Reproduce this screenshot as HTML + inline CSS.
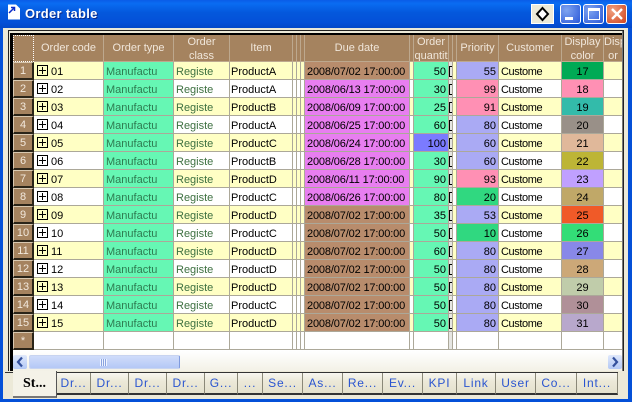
<!DOCTYPE html>
<html><head><meta charset="utf-8"><style>
html,body{margin:0;padding:0;width:632px;height:402px;overflow:hidden;background:#ece9d8}
*{box-sizing:border-box}
body{font:11px/14px "Liberation Sans",sans-serif;position:relative}
.a{position:absolute}
#title{left:0;top:0;width:632px;height:28px;background:linear-gradient(#0a5ce8 0,#0a6cf2 12%,#0458dc 45%,#0450d8 80%,#0348c8 100%)}
#t{left:25px;top:6px;color:#fff;font:bold 13px/16px "Liberation Sans",sans-serif;letter-spacing:.3px;text-shadow:1px 1px #0a2a8a}
.bt{top:4px;height:20px;border:1px solid #fff;border-radius:3px;background:radial-gradient(circle at 30% 30%,#7fa4f0,#2a58d8)}
#grid{left:13px;top:35px;width:609px;height:316px;overflow:hidden;background:#fff}
table{border-collapse:separate;border-spacing:0;table-layout:fixed;width:610px}
td{height:18px;padding:2px 2px 0;border-right:1px solid #aca899;border-bottom:1px solid #aca899;white-space:nowrap;overflow:hidden;color:#000;background:#fff}
tr:not(.h) td:nth-child(9){letter-spacing:-.15px}
tr:not(.h) td:nth-child(15){letter-spacing:-.4px}
tr.h td{height:27px;background:#a5835f;color:#f0e6da;text-align:center;padding:0;border-color:#bda88e}
tr.h div{height:26px;line-height:14px;margin-top:-1px}
tr.o td{background:#ffffc4}
td.r{background:#a5835f!important;color:#f2e8dc;text-align:center;padding:1px 0 0;border:1px solid #2a2418;border-top-color:#d8c8b0;border-left-color:#d8c8b0;border-bottom-width:2px;border-right-width:2px}
td.c{padding-left:17px;position:relative}
td.c i{position:absolute;left:3px;top:3px;width:11px;height:11px;border:1px solid #000;background:linear-gradient(#000,#000) 50% 50%/7px 1px no-repeat,linear-gradient(#000,#000) 50% 50%/1px 7px no-repeat}
td.m{background:#66f7b4!important;color:#2e7a50}
td.g{color:#3d7040}
td.i{padding-left:1px}
td.n{text-align:right;padding-right:2px}
td.d{text-align:center;padding:2px 0 0}
td.s{padding:0}
td.k{padding:0;position:relative;background:#e6e6e2!important}
td.k:before{content:"";position:absolute;left:0;top:4px;width:3px;height:9px;border:1px solid #000;border-right:0}
.bn{background:#b88c6c!important}.pk{background:#e87ef0!important}
.q{background:#66f7b4!important}.b{background:#aaaaf4!important}.p{background:#ff90b4!important}.gn{background:#30d880!important}
#sb{left:13px;top:351px;width:609px;height:20px;background:linear-gradient(#fff,#f3f1e6)}
.sbb{top:4px;width:14px;height:14px;background:linear-gradient(#dfe8fb,#b3c8f5);border-radius:2px}
.tab{top:373px;height:22px;background:linear-gradient(#f8f7f0,#ece9d8 40%,#e4e1cd);border-right:1px solid #8a8878;border-bottom:2px solid #333;color:#2a55d0;text-align:center;line-height:20px;font-size:12px;letter-spacing:.8px}
</style></head><body>
<div class="a" style="left:0;top:28px;width:632px;height:374px;background:#ece9d8"></div>
<div class="a" style="left:0;top:28px;width:3px;height:374px;background:#0450d8"></div>
<div class="a" style="left:628px;top:28px;width:4px;height:374px;background:#0450d8"></div>
<div class="a" style="left:0;top:399px;width:632px;height:3px;background:#0450d8"></div>
<div class="a" id="title"></div>
<svg class="a" style="left:7px;top:4px" width="14" height="16"><path d="M1 .5h8l4 4v11H1z" fill="#fff"/><path d="M2 9l5-5M4 3.5h3.500V7" stroke="#0a2ac8" fill="none" stroke-width="1.500"/></svg>
<div class="a" id="t">Order table</div>
<div class="a" style="left:531px;top:4px;width:23px;height:20px;background:#ece9d8;border:1px solid #fff"></div>
<svg class="a" style="left:535px;top:6px" width="15" height="16"><path d="M7.500 2L13 8l-5.500 6L2 8z" fill="#fff" stroke="#000" stroke-width="2"/></svg>
<div class="a bt" style="left:560px;width:21px"><div class="a" style="left:4px;top:12px;width:8px;height:3px;background:#fff"></div></div>
<div class="a bt" style="left:583px;width:21px"><div class="a" style="left:4px;top:3px;width:12px;height:12px;border:1px solid #fff;border-top-width:3px"></div></div>
<div class="a bt" style="left:606px;width:21px;background:radial-gradient(circle at 30% 30%,#f0a080,#d0431c)"><svg class="a" style="left:3px;top:2px" width="14" height="14"><path d="M2 2l10 10M12 2L2 12" stroke="#fff" stroke-width="2.400"/></svg></div>
<div class="a" style="left:8px;top:30px;width:616px;height:341px;background:#ece9d8;border:1px solid #222;border-bottom:0"></div>
<div class="a" style="left:10px;top:33px;width:612px;height:338px;background:#fff;border-top:2px solid #000;border-left:3px solid #000"></div>
<div class="a" style="left:622px;top:31px;width:1px;height:340px;background:#777"></div>
<div class="a" id="grid"><table>
<colgroup><col style="width:21px"><col style="width:70px"><col style="width:70px"><col style="width:56px"><col style="width:63px"><col style="width:4px"><col style="width:4px"><col style="width:4px"><col style="width:105px"><col style="width:4px"><col style="width:35px"><col style="width:4px"><col style="width:4px"><col style="width:42px"><col style="width:63px"><col style="width:42px"><col style="width:19px"></colgroup>
<tr class="h"><td style="border:1px dotted #fff"><td>Order code<td>Order type<td><div>Order<br>class</div><td>Item<td><td><td><td>Due date<td><td><div>Order<br>quantit</div><td><td><td>Priority<td>Customer<td><div>Display<br>color</div><td><div>Disp<br>or</div>
<tr class="o"><td class="r">1<td class="c"><i></i>01<td class="m">Manufactu<td class="g">Registe<td class="i">ProductA<td class="s"><td class="s"><td class="s"><td class="bn">2008/07/02 17:00:00<td class="s"><td class="n q">50<td class="k"><td class="s"><td class="n b">55<td>Custome<td class="d" style="background:#00aa55">17<td>
<tr><td class="r">2<td class="c"><i></i>02<td class="m">Manufactu<td class="g">Registe<td class="i">ProductA<td class="s"><td class="s"><td class="s"><td class="pk">2008/06/13 17:00:00<td class="s"><td class="n q">30<td class="k"><td class="s"><td class="n p">99<td>Custome<td class="d" style="background:#ff90b4">18<td>
<tr class="o"><td class="r">3<td class="c"><i></i>03<td class="m">Manufactu<td class="g">Registe<td class="i">ProductB<td class="s"><td class="s"><td class="s"><td class="pk">2008/06/09 17:00:00<td class="s"><td class="n q">25<td class="k"><td class="s"><td class="n p">91<td>Custome<td class="d" style="background:#33bbaa">19<td>
<tr><td class="r">4<td class="c"><i></i>04<td class="m">Manufactu<td class="g">Registe<td class="i">ProductA<td class="s"><td class="s"><td class="s"><td class="pk">2008/06/25 17:00:00<td class="s"><td class="n q">60<td class="k"><td class="s"><td class="n b">80<td>Custome<td class="d" style="background:#999088">20<td>
<tr class="o"><td class="r">5<td class="c"><i></i>05<td class="m">Manufactu<td class="g">Registe<td class="i">ProductC<td class="s"><td class="s"><td class="s"><td class="pk">2008/06/24 17:00:00<td class="s"><td class="n" style="background:#7b7bff">100<td class="k"><td class="s"><td class="n b">60<td>Custome<td class="d" style="background:#e0b89a">21<td>
<tr><td class="r">6<td class="c"><i></i>06<td class="m">Manufactu<td class="g">Registe<td class="i">ProductB<td class="s"><td class="s"><td class="s"><td class="pk">2008/06/28 17:00:00<td class="s"><td class="n q">30<td class="k"><td class="s"><td class="n b">60<td>Custome<td class="d" style="background:#bdb536">22<td>
<tr class="o"><td class="r">7<td class="c"><i></i>07<td class="m">Manufactu<td class="g">Registe<td class="i">ProductD<td class="s"><td class="s"><td class="s"><td class="pk">2008/06/11 17:00:00<td class="s"><td class="n q">90<td class="k"><td class="s"><td class="n p">93<td>Custome<td class="d" style="background:#c0a0ff">23<td>
<tr><td class="r">8<td class="c"><i></i>08<td class="m">Manufactu<td class="g">Registe<td class="i">ProductC<td class="s"><td class="s"><td class="s"><td class="pk">2008/06/26 17:00:00<td class="s"><td class="n q">80<td class="k"><td class="s"><td class="n gn">20<td>Custome<td class="d" style="background:#c0a868">24<td>
<tr class="o"><td class="r">9<td class="c"><i></i>09<td class="m">Manufactu<td class="g">Registe<td class="i">ProductD<td class="s"><td class="s"><td class="s"><td class="bn">2008/07/02 17:00:00<td class="s"><td class="n q">35<td class="k"><td class="s"><td class="n b">53<td>Custome<td class="d" style="background:#f05a28">25<td>
<tr><td class="r">10<td class="c"><i></i>10<td class="m">Manufactu<td class="g">Registe<td class="i">ProductC<td class="s"><td class="s"><td class="s"><td class="bn">2008/07/02 17:00:00<td class="s"><td class="n q">50<td class="k"><td class="s"><td class="n gn">10<td>Custome<td class="d" style="background:#33dd77">26<td>
<tr class="o"><td class="r">11<td class="c"><i></i>11<td class="m">Manufactu<td class="g">Registe<td class="i">ProductD<td class="s"><td class="s"><td class="s"><td class="bn">2008/07/02 17:00:00<td class="s"><td class="n q">60<td class="k"><td class="s"><td class="n b">80<td>Custome<td class="d" style="background:#8888e8">27<td>
<tr><td class="r">12<td class="c"><i></i>12<td class="m">Manufactu<td class="g">Registe<td class="i">ProductD<td class="s"><td class="s"><td class="s"><td class="bn">2008/07/02 17:00:00<td class="s"><td class="n q">50<td class="k"><td class="s"><td class="n b">80<td>Custome<td class="d" style="background:#cca878">28<td>
<tr class="o"><td class="r">13<td class="c"><i></i>13<td class="m">Manufactu<td class="g">Registe<td class="i">ProductD<td class="s"><td class="s"><td class="s"><td class="bn">2008/07/02 17:00:00<td class="s"><td class="n q">50<td class="k"><td class="s"><td class="n b">80<td>Custome<td class="d" style="background:#c0ccaa">29<td>
<tr><td class="r">14<td class="c"><i></i>14<td class="m">Manufactu<td class="g">Registe<td class="i">ProductC<td class="s"><td class="s"><td class="s"><td class="bn">2008/07/02 17:00:00<td class="s"><td class="n q">50<td class="k"><td class="s"><td class="n b">80<td>Custome<td class="d" style="background:#b09098">30<td>
<tr class="o"><td class="r">15<td class="c"><i></i>15<td class="m">Manufactu<td class="g">Registe<td class="i">ProductD<td class="s"><td class="s"><td class="s"><td class="bn">2008/07/02 17:00:00<td class="s"><td class="n q">50<td class="k"><td class="s"><td class="n b">80<td>Custome<td class="d" style="background:#b8a8cc">31<td>
<tr><td class="r">*<td><td><td><td><td class="s"><td class="s"><td class="s"><td><td class="s"><td><td class="s" style="background:#e6e6e2"><td class="s"><td><td><td><td>
</table></div>
<div class="a" id="sb">
<div class="a sbb" style="left:0"><svg width="14" height="14" style="display:block"><path d="M9 2.500L5 7l4 4.500" fill="none" stroke="#33509c" stroke-width="2.200"/></svg></div>
<div class="a" style="left:16px;top:4px;width:151px;height:14px;background:linear-gradient(#d0dcfa,#b4c8f6);border:1px solid #c8d4f0;border-right-color:#7f9ade;border-radius:2px"><div class="a" style="left:70px;top:3px;width:7px;height:7px;background:repeating-linear-gradient(90deg,#f0f4ff 0 1px,#8aa4e0 1px 2px)"></div></div>
<div class="a sbb" style="left:595px"><svg width="14" height="14" style="display:block"><path d="M5 2.500L9 7l-4 4.500" fill="none" stroke="#33509c" stroke-width="2.200"/></svg></div>
</div>
<div class="a" style="left:5px;top:372px;width:613px;height:1px;background:#333"></div>
<div class="a tab" style="left:57px;width:34px">Dr...</div>
<div class="a tab" style="left:91px;width:38px">Dr...</div>
<div class="a tab" style="left:129px;width:38px">Dr...</div>
<div class="a tab" style="left:167px;width:38px">Dr...</div>
<div class="a tab" style="left:205px;width:33px">G...</div>
<div class="a tab" style="left:238px;width:25px">...</div>
<div class="a tab" style="left:263px;width:40px">Se...</div>
<div class="a tab" style="left:303px;width:40px">As...</div>
<div class="a tab" style="left:343px;width:40px">Re...</div>
<div class="a tab" style="left:383px;width:40px">Ev...</div>
<div class="a tab" style="left:423px;width:34px">KPI</div>
<div class="a tab" style="left:457px;width:39px">Link</div>
<div class="a tab" style="left:496px;width:40px">User</div>
<div class="a tab" style="left:536px;width:41px">Co...</div>
<div class="a tab" style="left:577px;width:41px">Int...</div>
<div class="a" style="left:13px;top:371px;width:44px;height:27px;background:#f4f2e8;border-right:1px solid #555;border-bottom:2px solid #777;text-align:center;font:bold 14px/26px 'Liberation Serif',serif;color:#000">St...</div>
</body></html>
